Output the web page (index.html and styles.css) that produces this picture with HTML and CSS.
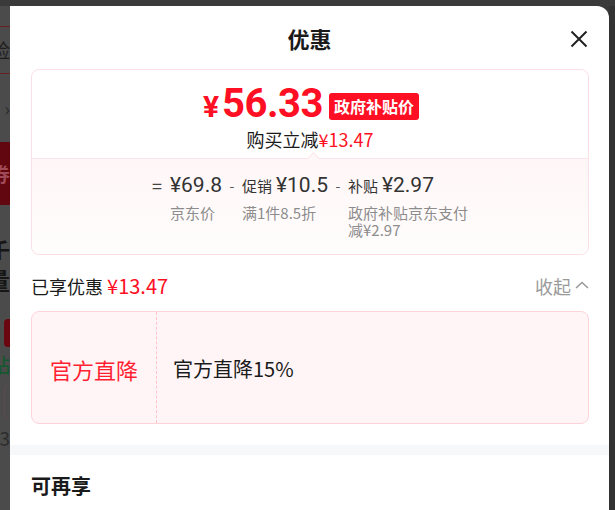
FILE: index.html
```html
<!DOCTYPE html>
<html lang="zh-CN">
<head>
<meta charset="utf-8">
<title>优惠</title>
<link rel="stylesheet" href="styles.css">
</head>
<body>
<div class="screen">
  <div class="topbar"></div>
  <div class="main">
    <div class="behind">
      <div class="bh bh-a"></div>
      <div class="bh bh-line"></div>
      <div class="bh bh-b"><span class="bh-text bh-dark">险</span></div>
      <div class="bh bh-line"></div>
      <div class="bh bh-c"><span class="bh-text bh-grey">关 ›</span></div>
      <div class="bh bh-red"><span class="bh-text bh-pink">领券</span></div>
      <div class="bh bh-gap1"></div>
      <div class="bh bh-d"><span class="bh-text bh-black">千</span></div>
      <div class="bh bh-e"><span class="bh-text bh-black bh-bold">量</span></div>
      <div class="bh bh-gap2"></div>
      <div class="bh bh-f"><span class="bh-pill"></span></div>
      <div class="bh bh-g"><span class="bh-text bh-green">补贴</span></div>
      <div class="bh bh-h"><span class="bh-box"></span></div>
      <div class="bh bh-i"><span class="bh-text bh-grey2">303</span></div>
    </div>

    <div class="sheet">
      <header class="sheet-head">
        <span class="head-side"></span>
        <h1 class="sheet-title">优惠</h1>
        <span class="head-side head-right">
          <svg class="close" width="18" height="18" viewBox="0 0 18 18" aria-label="关闭">
            <path d="M1.5 1.5 L16.5 16.5 M16.5 1.5 L1.5 16.5" stroke="#222" stroke-width="2" fill="none" stroke-linecap="butt"/>
          </svg>
        </span>
      </header>

      <section class="price-card">
        <div class="price-top">
          <div class="price-line">
            <span class="yen">¥</span><span class="amount">56.33</span><span class="badge">政府补贴价</span>
          </div>
          <div class="saving">购买立减<span class="red">¥13.47</span></div>
        </div>
        <div class="price-bottom">
          <span class="notch"></span>
          <div class="calc">
            <span class="op op-eq">=</span>
            <div class="term">
              <div class="term-main"><span class="num">¥69.8</span></div>
              <div class="term-label">京东价</div>
            </div>
            <span class="op">-</span>
            <div class="term">
              <div class="term-main"><span class="tag">促销</span><span class="num">¥10.5</span></div>
              <div class="term-label">满1件8.5折</div>
            </div>
            <span class="op">-</span>
            <div class="term term-wide">
              <div class="term-main"><span class="tag">补贴</span><span class="num">¥2.97</span></div>
              <div class="term-label">政府补贴京东支付减¥2.97</div>
            </div>
          </div>
        </div>
      </section>

      <div class="enjoyed-row">
        <div class="enjoyed">已享优惠 <span class="enjoyed-amount">¥13.47</span></div>
        <div class="fold">收起
          <svg class="chev" width="14" height="8" viewBox="0 0 14 8">
            <path d="M1 7 L7 1.5 L13 7" stroke="#9a9a9a" stroke-width="1.6" fill="none"/>
          </svg>
        </div>
      </div>

      <div class="coupon">
        <div class="coupon-left">官方直降</div>
        <div class="coupon-right">官方直降15%</div>
      </div>

      <div class="band"></div>

      <h2 class="more-title">可再享</h2>
    </div>

    <div class="edge"></div>
  </div>
</div>
</body>
</html>
```

FILE: styles.css
```css
* { box-sizing: border-box; }

html, body {
  margin: 0;
  padding: 0;
}

body {
  width: 615px;
  height: 510px;
  overflow: hidden;
  background: #3a3a3a;
  font-family: "Noto Sans CJK SC", "Noto Sans", sans-serif;
  color: #1a1a1a;
}

.screen {
  display: flex;
  flex-direction: column;
  height: 510px;
}

.topbar {
  flex: none;
  height: 6px;
  background: #3a3a3a;
}

.main {
  flex: 1;
  display: flex;
  min-height: 0;
  background: #3a3a3a;
}

/* ---------- page behind the overlay (left sliver) ---------- */
.behind {
  flex: none;
  width: 10px;
  background: #4b4b4b;
  display: flex;
  flex-direction: column;
  overflow: hidden;
}

.bh {
  flex: none;
  display: flex;
  justify-content: flex-end;
  align-items: center;
  overflow: hidden;
  white-space: nowrap;
}

.bh-a { height: 20px; }
.bh-line { height: 1px; background: #6a2020; }
.bh-b { height: 46px; }
.bh-c { height: 68px; }
.bh-red { height: 63px; background: #62060f; }
.bh-gap1 { height: 33px; }
.bh-d { height: 22px; }
.bh-e { height: 40px; }
.bh-gap2 { height: 18px; }
.bh-f { height: 30px; }
.bh-g { height: 34px; }
.bh-h { height: 40px; }
.bh-i { height: 60px; align-items: flex-start; }

.bh-text {
  flex: none;
  font-size: 19px;
  line-height: 20px;
}

.bh-dark { color: #1e1e1e; }
.bh-grey { color: #2a2a2a; font-size: 18px; }
.bh-pink { color: #a04a58; font-weight: 700; }
.bh-black { color: #161616; font-weight: 700; font-size: 21px; }
.bh-bold { font-size: 24px; }
.bh-green { color: #0d5a2c; font-size: 20px; }
.bh-grey2 { color: #2c2c2c; font-size: 19px; padding-top: 6px; }

.bh-pill {
  flex: none;
  width: 20px;
  height: 28px;
  margin-right: -14px;
  border-radius: 4px;
  background: #6a0610;
}

.bh-box {
  flex: none;
  width: 30px;
  height: 34px;
  margin-right: -24px;
  border: 1px solid #5c4a4c;
  border-radius: 4px;
}

/* ---------- sheet ---------- */
.sheet {
  flex: none;
  width: 599px;
  background: #fff;
  border-top-right-radius: 12px;
  overflow: hidden;
}

.edge {
  flex: none;
  width: 6px;
  background: #323232;
}

.sheet-head {
  height: 63px;
  display: grid;
  grid-template-columns: 1fr auto 1fr;
  align-items: center;
  padding: 0 21px 0 21px;
}

.sheet-title {
  margin: 0;
  font-size: 22px;
  line-height: 30px;
  font-weight: 700;
  color: #1a1a1a;
  padding-top: 1px;
}

.head-right {
  display: flex;
  justify-content: flex-end;
  padding-top: 2px;
}

.close { display: block; }

/* ---------- price card ---------- */
.price-card {
  margin: 0 20px 0 21px;
  border: 1px solid #fbdfe5;
  border-radius: 8px;
}

.price-top {
  height: 88px;
  padding-top: 12px;
  display: flex;
  flex-direction: column;
  align-items: center;
}

.price-line {
  display: flex;
  align-items: baseline;
  height: 44px;
  color: #ff0f23;
  font-family: Roboto, "Noto Sans", sans-serif;
  padding-left: 2px;
}

.yen {
  font-size: 30px;
  font-weight: 700;
  line-height: 44px;
  margin-right: 3px;
}

.amount {
  font-size: 40px;
  font-weight: 700;
  line-height: 44px;
  letter-spacing: -0.5px;
}

.badge {
  align-self: center;
  margin-left: 6px;
  margin-top: 4px;
  height: 27px;
  padding: 0 5px;
  background: #ff0f23;
  color: #fff;
  border-radius: 3px;
  font-family: "Noto Sans CJK SC", sans-serif;
  font-size: 16px;
  font-weight: 700;
  line-height: 27px;
}

.saving {
  margin-top: 1px;
  font-size: 18px;
  line-height: 24px;
  color: #1a1a1a;
}

.red { color: #ff0f23; }

.price-bottom {
  position: relative;
  height: 96px;
  border-top: 1px solid #fde4ea;
  border-radius: 0 0 8px 8px;
  background: linear-gradient(to bottom, #fff6f7, #fffdfd);
  padding-top: 13px;
}

.notch {
  position: absolute;
  left: 277px;
  top: -5px;
  width: 9px;
  height: 9px;
  background: #fff8f9;
  border-left: 1px solid #fde4ea;
  border-top: 1px solid #fde4ea;
  transform: rotate(45deg);
}

.calc {
  display: flex;
  justify-content: center;
  align-items: flex-start;
  padding-left: 2px;
}

.op {
  flex: none;
  width: 20px;
  text-align: center;
  line-height: 26px;
  font-size: 14px;
  color: #555;
}

.op-eq {
  width: 18px;
  font-size: 18px;
  text-align: left;
  color: #444;
}

.term {
  flex: none;
  display: flex;
  flex-direction: column;
}

.term-wide { width: 122px; }

.term-main {
  display: flex;
  align-items: baseline;
  height: 26px;
  line-height: 26px;
  white-space: nowrap;
}

.tag {
  font-size: 15px;
  color: #333;
  margin-right: 4px;
}

.num {
  font-family: Roboto, "Noto Sans", sans-serif;
  font-size: 21px;
  font-weight: 400;
  color: #333;
}

.term-label {
  margin-top: 6px;
  font-size: 15px;
  line-height: 17px;
  color: #8c8c8c;
  white-space: nowrap;
}

.term-wide .term-label {
  white-space: normal;
  word-break: break-all;
}

/* ---------- enjoyed row ---------- */
.enjoyed-row {
  display: flex;
  justify-content: space-between;
  align-items: center;
  padding: 19px 20px 13px 21px;
  height: 56px;
}

.enjoyed {
  font-size: 18px;
  line-height: 24px;
  color: #1a1a1a;
}

.enjoyed-amount {
  font-size: 20px;
  color: #ff0f23;
}

.fold {
  display: flex;
  align-items: center;
  font-size: 18px;
  line-height: 24px;
  color: #9a9a9a;
}

.chev {
  display: block;
  margin-left: 4px;
  margin-top: -3px;
}

/* ---------- coupon ---------- */
.coupon {
  margin: 0 20px 0 21px;
  height: 113px;
  display: flex;
  border: 1px solid #ffd3da;
  border-radius: 8px;
  background: #fff5f6;
}

.coupon-left {
  flex: none;
  width: 125px;
  display: flex;
  align-items: center;
  justify-content: center;
  border-right: 1px dashed #ffc3cc;
  font-size: 22px;
  color: #ff1f33;
  padding-top: 2px;
}

.coupon-right {
  flex: 1;
  display: flex;
  align-items: center;
  padding-left: 16px;
  padding-top: 2px;
  font-size: 20px;
  color: #1a1a1a;
}

.band {
  margin-top: 21px;
  height: 10px;
  background: #f7f8fa;
}

.more-title {
  margin: 17px 0 0 0;
  padding-left: 21px;
  font-size: 20px;
  line-height: 28px;
  font-weight: 700;
  color: #1a1a1a;
}
```
